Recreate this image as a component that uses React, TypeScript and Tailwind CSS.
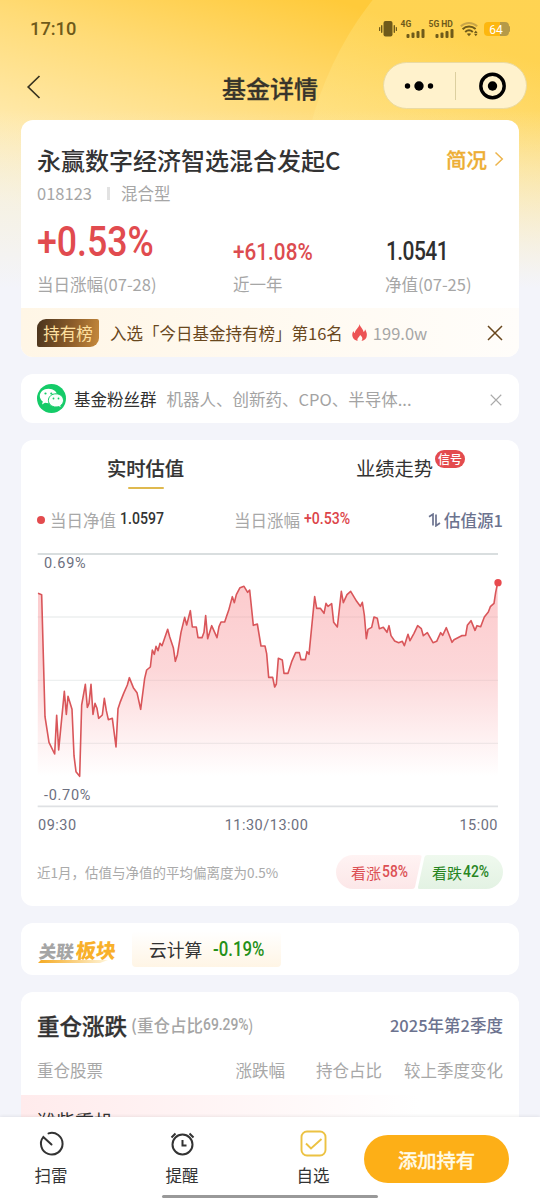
import type { ReactNode } from "react";

const SERIES: [number, number][] = [
  [54,145],[65,149],[75,515],[87,592],[104,627],[110,511],[116,615],[133,439],[139,508],[144,454],[156,493],[162,632],[168,680],[179,694],[185,480],[196,418],[202,487],[207,475],[213,418],[219,508],[225,475],[231,490],[236,520],[247,510],[253,460],[259,497],[265,524],[277,520],[288,606],[294,491],[300,473],[311,445],[322,420],[328,398],[340,428],[351,443],[362,493],[374,400],[380,375],[391,366],[397,315],[403,328],[408,304],[414,317],[420,295],[426,302],[432,285],[443,253],[449,275],[460,308],[466,349],[472,330],[483,262],[494,217],[500,240],[511,197],[517,246],[529,246],[534,278],[546,278],[552,262],[557,212],[563,281],[575,242],[591,278],[597,245],[603,231],[614,231],[620,213],[626,196],[637,155],[643,173],[649,149],[660,128],[672,124],[683,142],[689,135],[700,241],[712,237],[723,303],[735,303],[740,326],[746,397],[758,397],[764,426],[769,417],[775,340],[787,345],[792,385],[804,385],[815,350],[827,323],[838,323],[843,344],[856,344],[861,320],[867,328],[884,155],[890,190],[901,190],[912,205],[918,175],[924,184],[935,176],[941,232],[952,246],[964,139],[970,173],[981,149],[992,139],[1010,169],[1021,184],[1027,172],[1033,210],[1039,281],[1044,253],[1055,247],[1062,216],[1072,220],[1078,251],[1090,247],[1101,262],[1107,242],[1113,272],[1124,288],[1136,293],[1147,289],[1153,302],[1164,268],[1170,287],[1182,265],[1193,242],[1204,251],[1210,272],[1222,263],[1239,293],[1250,289],[1262,263],[1268,271],[1279,248],[1296,292],[1302,284],[1325,272],[1337,271],[1342,241],[1353,227],[1365,256],[1371,242],[1382,245],[1393,216],[1405,201],[1411,185],[1422,175],[1427,142],[1433,113],
];

const LINE = SERIES.map(([x, y]) => `${x},${y}`).join(" ");

function Num({ children, className }: { children: ReactNode; className: string }) {
  return (
    <div className={`flex-none whitespace-nowrap font-['Roboto'] font-medium ${className}`}>
      <span className="inline-block origin-left scale-x-[0.84]">{children}</span>
    </div>
  );
}

function Signal() {
  return (
    <svg className="block h-[9px] w-[19px]" viewBox="0 0 19 9" fill="#6f5a1a">
      <rect x="0.5" y="5" width="3" height="4" rx="1" />
      <rect x="5.5" y="3.5" width="3" height="5.5" rx="1" />
      <rect x="10.5" y="2" width="3" height="7" rx="1" />
      <rect x="15.5" y="0" width="3" height="9" rx="1" />
    </svg>
  );
}

function StatusBar() {
  return (
    <div className="flex h-[58px] items-center pl-[30px] pr-[30px] font-['Roboto'] text-[#6f5a1a]">
      <div className="text-[18.300px] font-medium leading-none">17:10</div>
      <div className="ml-auto flex items-center">
        <svg className="h-4 w-[18px]" viewBox="0 0 18 16" fill="#6f5a1a">
          <rect x="4.5" y="0" width="9" height="15.5" rx="2" />
          <rect x="2" y="4" width="1.4" height="8" rx=".7" />
          <rect x="0" y="6" width="1.2" height="4" rx=".6" />
          <rect x="14.6" y="4" width="1.4" height="8" rx=".7" />
          <rect x="16.8" y="6" width="1.2" height="4" rx=".6" />
        </svg>
        <div className="ml-1 flex h-[18px] w-6 flex-col justify-between text-[8.500px] font-bold leading-[8px]">
          <span>4G</span>
          <span className="ml-[5px]"><Signal /></span>
        </div>
        <div className="ml-1 flex h-[18px] w-[26px] flex-col justify-between whitespace-nowrap text-[8.500px] font-bold leading-[8px]">
          <span>5G HD</span>
          <span className="ml-[6px]"><Signal /></span>
        </div>
        <svg className="ml-[5px] h-[16px] w-[19px]" viewBox="0 0 19 16" fill="none" stroke="#6f5a1a" strokeWidth="2">
          <path d="M.8 5.200C5.500.8 12.500.8 17.200 5.200" stroke="#c9a548" />
          <path d="M2.600 8.200C6.200 4.700 11.800 4.700 15.600 8" />
          <path d="M5.200 11C7.500 8.900 10.500 8.900 12.800 11" />
          <path d="M9 15.200 6.800 12.800Q9 11.500 11.200 12.800Z" fill="#6f5a1a" stroke="none" />
          <path d="M14 12 15.800 9.600 17.600 12ZM14 12.800 15.800 15.200 17.600 12.800Z" fill="#6f5a1a" stroke="none" />
        </svg>
        <div className="ml-[5px] flex h-[14px] w-[25px] items-center justify-center rounded-[4px] bg-[linear-gradient(90deg,#fdb70f_64%,#b59a48_64%)] pt-px text-[12px] leading-none text-white">
          64
        </div>
        <div className="h-[6px] w-[1.500px] rounded-r bg-[#b59a48]" />
      </div>
    </div>
  );
}

function NavBar() {
  return (
    <div className="flex h-[62px] items-start">
      <svg className="ml-[26px] mt-[17px] h-6 w-4" viewBox="0 0 16 24" fill="none" stroke="#37321f" strokeWidth="1.700">
        <path d="M13.500 1 2.200 12l11.300 11" />
      </svg>
      <div className="ml-[180px] mt-[12px] w-[96px] whitespace-nowrap text-[24px] font-medium leading-[36px] text-[#37342b] [-webkit-text-stroke:0.3px]">基金详情</div>
      <div className="ml-auto mr-[13px] mt-1 flex h-[47px] w-[144px] items-center rounded-full border border-[#eadaa2] bg-[#fff2cc]">
        <svg className="h-[45px] w-[142px]" viewBox="0 0 142 45">
          <circle cx="23.500" cy="23" r="2.700" />
          <circle cx="35" cy="23" r="4.700" />
          <circle cx="46.500" cy="23" r="2.700" />
          <path d="M71.500 9v28" stroke="#dccf9f" />
          <circle cx="108.500" cy="23" r="11.700" fill="none" stroke="#000" strokeWidth="3.400" />
          <circle cx="108.500" cy="23" r="4.700" />
        </svg>
      </div>
    </div>
  );
}

function Cross({ className }: { className: string }) {
  return (
    <svg className={`flex-none ${className}`} viewBox="0 0 16 16" fill="none" stroke="currentColor" strokeWidth="1.500">
      <path d="M1 1l14 14M15 1 1 15" />
    </svg>
  );
}

function FundCard() {
  return (
    <section className="h-[237px] overflow-hidden rounded-xl bg-white">
      <div className="flex h-[188px] flex-col px-4">
        <div className="mt-[22px] flex h-[36px] items-center justify-between">
          <h1 className="whitespace-nowrap text-[24px] font-medium leading-[36px] text-[#333]">永赢数字经济智选混合发起C</h1>
          <div className="-mt-[3px] flex items-center text-[20.500px] font-medium leading-[34px] text-[#edae35] [-webkit-text-stroke:0.3px]">
            简况
            <svg className="ml-[7px] mr-[-1px] h-4 w-[10px]" viewBox="0 0 10 16" fill="none" stroke="#edb54d" strokeWidth="1.500"><path d="M1.500 1.500 8.300 8l-6.800 6.500" /></svg>
          </div>
        </div>
        <div className="mt-[2px] flex h-[26px] items-center text-[16.500px] text-[#a6a6a6]">
          <span>018123</span><span className="ml-[15px] mr-[11px] h-[13px] w-[3px] bg-[#e2e2e2]" /><span>混合型</span>
        </div>
        <div className="flex h-[64px] items-end">
          <Num className="w-[196px] text-[42.500px] leading-[56px] text-[#e14b4f]">+0.53%</Num>
          <Num className="w-[153px] text-[24.700px] leading-[36px] text-[#dc4c50]">+61.08%</Num>
          <Num className="text-[25px] leading-[36px] tracking-[-0.700px] text-[#2f2f2f]">1.0541</Num>
        </div>
        <div className="mt-[1px] flex h-[26px] items-center whitespace-nowrap text-[16.500px] text-[#a6a6a6]">
          <span className="w-[196px]">当日涨幅(07-28)</span><span className="w-[152px]">近一年</span><span>净值(07-25)</span>
        </div>
      </div>
      <div className="flex h-[49px] items-center bg-[linear-gradient(90deg,#fff6e6,#fffdfa)] pl-4 pr-4 text-[16.500px] text-[#69471d]">
        <div className="flex h-7 w-[62px] items-center justify-center rounded-bl-[2px] rounded-br-[9px] rounded-tl-[9px] rounded-tr-[2px] bg-[linear-gradient(100deg,#49331d,#8b5c2a_55%,#c78a3c)] pt-px leading-none text-[#ffe0a0]">持有榜</div>
        <span className="ml-[11px] mt-[2px] whitespace-nowrap">入选「今日基金持有榜」第16名</span>
        <svg className="ml-[9px] h-[17px] w-[15px] flex-none" viewBox="0 0 15 17">
          <path d="M7.500 0c.4 2.800 3.600 4.500 4.100 8 1-.6 1.400-1.600 1.400-2.700 3.600 5.600 1.800 10.700-3.500 11.600 1.700-2 .7-4.200-1.300-6-1 2.200-3.600 3.400-2.600 6C.8 16-1.300 10.800 1.500 7c.2 1.300.7 1.800 1.400 2.100C3 5.400 6.900 4.200 7.500 0Z" fill="#ec5354" />
        </svg>
        <span className="ml-[6px] mt-px text-[#a6a6a6]">199.0w</span>
        <Cross className="ml-auto h-[16px] w-[16px]" />
      </div>
    </section>
  );
}

function GroupCard() {
  return (
    <section className="mt-[17px] flex h-[49px] items-center rounded-xl bg-white px-4 text-[16.500px]">
      <svg className="h-[29px] w-[29px] flex-none" viewBox="0 0 29 29">
        <circle cx="14.500" cy="14.500" r="14.500" fill="#14cb68" />
        <path d="M11.500 4.800c-5 0-8.700 3.200-8.700 7.200 0 2.200 1.200 4.200 3 5.500l-.8 3 3-1.700c1 .3 2.200.5 3.500.5 5 0 8.800-3.200 8.800-7.300s-3.800-7.200-8.800-7.200Z" fill="#fff" />
        <path d="M19 9.800c-4.300 0-7.600 2.900-7.600 6.600S14.700 23 19 23c1 0 1.900-.1 2.700-.4l2.800 1.500-.8-2.600c1.700-1.200 2.800-3 2.800-5.100 0-3.700-3.300-6.600-7.500-6.600Z" fill="#f8fffb" stroke="#14cb68" />
        <g fill="#14cb68"><circle cx="8.500" cy="9.500" r="1.100" /><circle cx="14.300" cy="9.500" r="1.100" /><circle cx="16.500" cy="14.500" r=".9" /><circle cx="21.500" cy="14.500" r=".9" /></g>
      </svg>
      <span className="ml-[8px] mt-[2px] text-[#303030]">基金粉丝群</span>
      <span className="ml-[10px] mt-[2px] whitespace-nowrap text-[#a3a3a3]">机器人、创新药、CPO、半导体...</span>
      <Cross className="ml-auto mr-[1px] mt-[2px] h-3 w-3 text-[#aaa]" />
    </section>
  );
}

function Chart() {
  return (
    <div className="relative h-[270px] font-['Roboto'] text-[14.500px] leading-4 tracking-[0.700px] text-[#6d7080]">
      <svg className="block h-[270px] w-[498px]" viewBox="3 0 1494 810">
        <defs>
          <linearGradient id="area" gradientUnits="userSpaceOnUse" x1="0" y1="120" x2="0" y2="694">
            <stop offset="0" stopColor="#f99b9f" stopOpacity=".52" />
            <stop offset=".45" stopColor="#f9a2a6" stopOpacity=".43" />
            <stop offset="1" stopColor="#f9a2a6" stopOpacity="0" />
          </linearGradient>
        </defs>
        <path d="M53 216H1434M53 406H1434M53 595H1434" stroke="#edf0f0" strokeWidth="4" />
        <path d="M53 27H1434" stroke="#cdd3d4" strokeWidth="5" />
        <path d="M53 784H1434" stroke="#dfe1e4" strokeWidth="5" />
        <polygon points={`53,694 ${LINE} 1434,694`} fill="url(#area)" />
        <polyline points={LINE} fill="none" stroke="#d9565a" strokeWidth="4.800" strokeLinejoin="round" />
        <circle cx="1434" cy="113" r="11" fill="#e84a4e" />
      </svg>
      <span className="absolute left-[23px] top-[11px]">0.69%</span>
      <span className="absolute left-[23px] top-[243px]">-0.70%</span>
    </div>
  );
}

function EstimateCard() {
  return (
    <section className="mt-[17px] flex h-[466px] flex-col rounded-xl bg-white">
      <div className="flex h-[60px] justify-around text-[19.300px] leading-[57px] text-[#333]">
        <div className="flex w-[249px] flex-col items-center font-medium">
          <span className="h-[47px] [-webkit-text-stroke:0.2px]">实时估值</span>
          <span className="h-[2px] w-9 rounded bg-[#dfb94f]" />
        </div>
        <div className="flex w-[249px] justify-center">
          <div className="relative">
            业绩走势
            <span className="absolute left-[79px] top-[10px] flex h-[18px] w-[30px] items-center justify-center whitespace-nowrap rounded-full bg-[#e34b4e] text-[12px] font-medium leading-none text-white">信号</span>
          </div>
        </div>
      </div>
      <div className="flex h-[40px] items-center px-4 text-[16.500px] text-[#a8a8a8]">
        <span className="h-2 w-2 rounded-full bg-[#e34b4e]" />
        <span className="ml-[5px] mr-[4px]">当日净值</span>
        <Num className="-mt-[2px] w-[114px] text-[16.800px] text-[#333]">1.0597</Num>
        <span className="mr-[4px]">当日涨幅</span>
        <Num className="-mt-[2px] text-[16.800px] text-[#dc4549]">+0.53%</Num>
        <div className="ml-auto flex items-center font-medium text-[#6c738f]">
          <svg className="mr-[3px] h-[14px] w-[13px]" viewBox="0 0 13 14" fill="none" stroke="#6c738f" strokeWidth="1.700">
            <path d="M5 12.500V1.200L1 3.800M8 1.500V12.800l4-2.800" />
          </svg>
          估值源1
        </div>
      </div>
      <div className="mt-[5px]"><Chart /></div>
      <div className="flex h-5 items-center justify-between pl-[17px] pr-[21px] pt-[2px] font-['Roboto'] text-[14.500px] tracking-[0.500px] text-[#6d7080]">
        <span>09:30</span><span className="-ml-[3px]">11:30/13:00</span><span>15:00</span>
      </div>
      <div className="mt-[20px] flex h-[34px] items-center px-4">
        <span className="whitespace-nowrap text-[13.500px] text-[#aaa]">近1月，估值与净值的平均偏离度为0.5%</span>
        <div className="relative ml-auto flex h-[34px] w-[167px] text-[15px] leading-[34px]">
          <svg className="absolute inset-0 h-[34px] w-[167px]" viewBox="0 0 167 34">
            <defs>
              <linearGradient id="rise" x2="0" y2="1"><stop stopColor="#fff3f3" /><stop offset="1" stopColor="#fce7e8" /></linearGradient>
              <linearGradient id="fall" x2="0" y2="1"><stop stopColor="#eff9ee" /><stop offset="1" stopColor="#e3f2e3" /></linearGradient>
            </defs>
            <path d="M17 0H83Q86 0 85.500 2L79 32Q78.500 34 76 34H17A17 17 0 0 1 17 0Z" fill="url(#rise)" />
            <path d="M91.500 0H150A17 17 0 0 1 150 34H84Q81.500 34 82 32L88.500 2Q89 0 91.500 0Z" fill="url(#fall)" />
          </svg>
          <div className="relative flex w-[81px] pl-[15px] text-[#dc5054]"><span className="mr-px mt-px">看涨</span><Num className="text-[16.500px]">58%</Num></div>
          <div className="relative flex pl-[15px] text-[#27851f]"><span className="mr-px mt-px">看跌</span><Num className="text-[16.500px]">42%</Num></div>
        </div>
      </div>
    </section>
  );
}

function SectorCard() {
  return (
    <section className="mt-[17px] flex h-[52px] items-center rounded-xl bg-white pl-[17px]">
      <div className="flex h-[30px] w-[79px] flex-col pt-[2px]">
        <div className="flex h-[24px] origin-bottom-left -skew-x-[6deg] items-center gap-[2px] whitespace-nowrap font-black leading-[24px]">
          <span className="mt-[5px] text-[17.500px] text-[#a5a5a5]">关联</span>
          <span className="mt-[3px] text-[20px] text-[#f8b02b]">板块</span>
        </div>
        <svg className="h-[4px] w-[70px]" viewBox="0 0 70 4">
          <defs><linearGradient id="swoosh"><stop stopColor="#f5aa22" /><stop offset="1" stopColor="#fff4d8" /></linearGradient></defs>
          <path d="M3 0H70L62 3H0Z" fill="url(#swoosh)" />
        </svg>
      </div>
      <div className="ml-[15px] flex h-[36px] w-[149px] items-center rounded-[4px] bg-[linear-gradient(180deg,#fff,#fff5e5)] pl-[17px]">
        <span className="text-[17.800px] text-[#333]">云计算</span>
        <Num className="ml-[11px] text-[20px] text-[#249017]">-0.19%</Num>
      </div>
    </section>
  );
}

function HoldingsCard() {
  return (
    <section className="mt-[17px] h-[220px] overflow-hidden rounded-xl bg-white">
      <div className="mt-[15px] flex h-9 items-center px-4">
        <h2 className="text-[22.500px] font-medium leading-9 text-[#333] [-webkit-text-stroke:0.300px]">重仓涨跌</h2>
        <div className="ml-[4px] flex items-center text-[16.500px] text-[#a5a5a5]">
          <span className="font-medium">(重仓占比</span>
          <Num className="w-[45px]">69.29%</Num>
          <span>)</span>
        </div>
        <span className="ml-auto text-[16.500px] font-medium text-[#6c738f]">2025年第2季度</span>
      </div>
      <div className="mt-[15px] flex h-6 items-center pl-4 pr-[16px] text-[16.500px] text-[#a8a8a8]">
        <span>重仓股票</span>
        <span className="ml-auto">涨跌幅</span>
        <span className="ml-[31px]">持仓占比</span>
        <span className="ml-[22px]">较上季度变化</span>
      </div>
      <div className="mt-[13px] h-[80px] bg-[linear-gradient(90deg,#ffebec,#fff_80%)] px-4 pt-[11px] text-[19px] leading-[30px] text-[#333]">潍柴重机</div>
    </section>
  );
}

function BottomBar() {
  return (
    <footer className="relative flex h-[83px] flex-none flex-col bg-white shadow-[0_-1px_3px_rgba(0,0,0,0.07)]">
      <div className="flex h-[78px] text-[16.500px] leading-6 text-[#333]">
        <div className="ml-[18px] flex w-[66px] flex-col items-center pt-[13px]">
          <svg className="h-[27px] w-[27px]" viewBox="0 0 27 27" fill="none" stroke="#333" strokeWidth="2" strokeLinecap="round">
            <path d="M10.500 3.400A10.800 10.800 0 1 1 5.300 7L13.500 14.500" />
          </svg>
          <span className="mt-[6px]">扫雷</span>
        </div>
        <div className="ml-[65px] flex w-[66px] flex-col items-center pt-[13px]">
          <svg className="h-[27px] w-[27px]" viewBox="0 0 27 27" fill="none" stroke="#333" strokeWidth="2">
            <circle cx="13.500" cy="14.500" r="10" />
            <path d="M13.500 10V15.500H17.500M2.500 7.500 6.500 3.500M20.500 3.500l4 4" />
          </svg>
          <span className="mt-[6px]">提醒</span>
        </div>
        <div className="ml-[65px] flex w-[66px] flex-col items-center pt-[13px]">
          <svg className="h-[27px] w-[27px]" viewBox="0 0 27 27" fill="none" stroke="#ecc242" strokeWidth="1.900">
            <rect x="1.500" y="1.500" width="24" height="24" rx="5.500" />
            <path d="m6 13.500 5 5 10.500-9.500" />
          </svg>
          <span className="mt-[6px]">自选</span>
        </div>
        <button className="ml-[18px] mt-[18px] h-12 w-[145px] rounded-full bg-[#fdaf17] pt-px text-[19.300px] font-medium text-[#fffbe8] [-webkit-text-stroke:0.300px]">添加持有</button>
      </div>
      <div className="ml-[162px] h-[3px] w-[216px] rounded-full bg-[#999]" />
    </footer>
  );
}

export default function App() {
  return (
    <div className="relative flex h-[1200px] w-[540px] flex-col overflow-hidden bg-[#f3f4fa] font-['Noto_Sans_CJK_SC',sans-serif]">
      <div className="absolute inset-x-0 top-0 h-[300px] overflow-hidden bg-[linear-gradient(197deg,#ffca3a_60px,#ffdb76_165px,#ffe9aa_270px,#f9efcb_350px)]">
        <svg className="h-[300px] w-[540px]" viewBox="0 0 540 300">
          <defs><linearGradient id="halo" x2="0" y2="1"><stop stopColor="#ffec92" stopOpacity=".28" /><stop offset="1" stopColor="#fff0a0" stopOpacity=".2" /></linearGradient></defs>
          <circle cx="640" cy="210" r="340" fill="url(#halo)" />
        </svg>
        <div className="absolute inset-x-0 bottom-0 h-[190px] bg-[linear-gradient(180deg,transparent,#f3f4fa_94%)]" />
      </div>
      <div className="relative flex-none">
        <StatusBar />
        <NavBar />
      </div>
      <main className="relative min-h-0 flex-1 overflow-hidden px-[21px]">
        <FundCard />
        <GroupCard />
        <EstimateCard />
        <SectorCard />
        <HoldingsCard />
      </main>
      <BottomBar />
    </div>
  );
}
